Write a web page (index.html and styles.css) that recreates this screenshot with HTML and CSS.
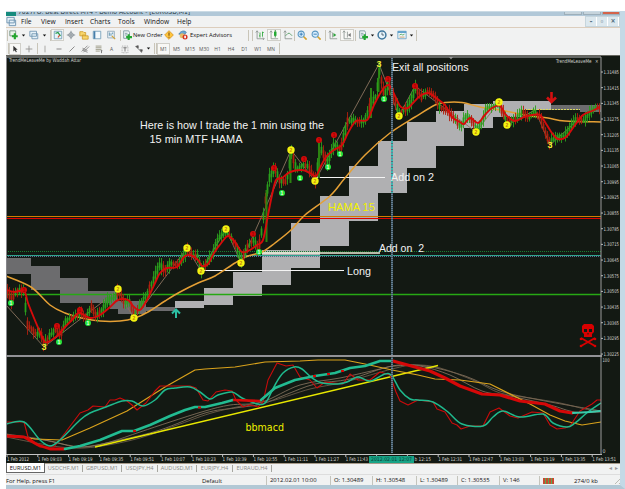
FILE: index.html
```html
<!DOCTYPE html>
<html lang="en">
<head>
<meta charset="utf-8">
<title>Demo Account - [EURUSD,M1]</title>
<link rel="stylesheet" href="styles.css">
</head>
<body>
<svg class="defs" width="0" height="0">
  <symbol id="plus" viewBox="0 0 12 12"><path d="M1 1h7v6H1z" fill="#eaf4ea" stroke="#6b8a78"/><path d="M7 4v7M3.500 7.500h7" stroke="#23a52d" stroke-width="2.600"/></symbol>
  <symbol id="pages" viewBox="0 0 12 12"><path d="M1 1.500h8v6H1zM3.500 4.500h7v6h-7z" fill="#e6f1f8" stroke="#6c93b0"/></symbol>
  <symbol id="market" viewBox="0 0 12 12"><path d="M1.500 1.500h9v9h-9z" fill="#e4f3fa" stroke="#6d9bb5"/><path d="M3 4l3-1 3 4" stroke="#279b49" fill="none" stroke-width="1.500"/><path d="M6 9l2-3" stroke="#d54a2d" stroke-width="1.500"/></symbol>
  <symbol id="cross" viewBox="0 0 12 12"><path d="M6 1v10M1 6h10" stroke="#77828a"/><circle cx="6" cy="6" r="2.700" fill="none" stroke="#77828a"/></symbol>
  <symbol id="folders" viewBox="0 0 12 12"><path d="M1 2h4l1 1h2v4H1zM4 6h3l1 1h3v4H4z" fill="#f8d66c" stroke="#cf9d31"/></symbol>
  <symbol id="terminal" viewBox="0 0 12 12"><path d="M1.500 1.500h9v9h-9z" fill="#f4f9fc" stroke="#6f9cb8"/><path d="M3 1.500v9" stroke="#477eaa" stroke-width="2"/></symbol>
  <symbol id="tester" viewBox="0 0 12 12"><path d="M2 1.500h8v8H2z" fill="#e8eff6" stroke="#8ba5b5"/><path d="M4 3v4M6 4v3M8 3v2" stroke="#4f8aa6"/><path d="M7 7l4 4" stroke="#d0a438" stroke-width="1.500"/></symbol>
  <symbol id="order" viewBox="0 0 12 12"><path d="M2 1h6l1 2v7H2z" fill="#eef3f5" stroke="#77949a"/><path d="M3.500 4h3M3.500 6h3" stroke="#7a96a0"/><path d="M8 5v7M5 8.500h7" stroke="#22a632" stroke-width="2.500"/></symbol>
  <symbol id="diamond" viewBox="0 0 12 12"><path d="M6 .8L11.200 6 6 11.200.8 6z" fill="#ffc63c" stroke="#d89422"/><path d="M6 3v4M6 8v1.300" stroke="#805715" stroke-width="1.400"/></symbol>
  <symbol id="expert" viewBox="0 0 12 12"><path d="M1 5C3 1 8 0 10 3L8 5z" fill="#6ba8d2" stroke="#4b7fa8"/><circle cx="5" cy="7" r="3" fill="#e9b965"/><circle cx="8.500" cy="8.500" r="3" fill="#d33322"/><path d="M7.500 7h2v3h-2z" fill="#fff"/></symbol>
  <symbol id="bars" viewBox="0 0 12 12"><path d="M2.500 1v9.500H11M1 3l1.500-2L4 3M9.500 9l1.500 1.500L9.500 12" fill="none" stroke="#8a948f"/><path d="M6 3v6M9 2v6M5 7h1M9 3h1.500" stroke="#26a534"/></symbol>
  <symbol id="candle" viewBox="0 0 12 12"><path d="M2.500 1v9.500H11M1 3l1.500-2L4 3" fill="none" stroke="#8a948f"/><path d="M7.500 0v9" stroke="#187c24"/><path d="M6 2h3v5H6z" fill="#24aa35"/></symbol>
  <symbol id="line" viewBox="0 0 12 12"><path d="M2.500 1v9.500H11M1 3l1.500-2L4 3" fill="none" stroke="#8a948f"/><path d="M3 7l3-3 2 0 3 3" fill="none" stroke="#4c985b"/></symbol>
  <symbol id="zin" viewBox="0 0 12 12"><path d="M7.500 7.500l4 4" stroke="#d6a32f" stroke-width="2"/><circle cx="5" cy="5" r="3.700" fill="#d8efff" stroke="#5896c0" stroke-width="1.300"/><path d="M3 5h4M5 3v4" stroke="#276eaa"/></symbol>
  <symbol id="zout" viewBox="0 0 12 12"><path d="M7.500 7.500l4 4" stroke="#d6a32f" stroke-width="2"/><circle cx="5" cy="5" r="3.700" fill="#d8efff" stroke="#5896c0" stroke-width="1.300"/><path d="M3 5h4" stroke="#276eaa"/></symbol>
  <symbol id="scroll" viewBox="0 0 12 12"><path d="M2.500 1v9.500H11M1 3l1.500-2L4 3M5.500 3v6" fill="none" stroke="#8a948f"/><path d="M6.500 3.500L10 6 6.500 8.500z" fill="#2ca13b"/></symbol>
  <symbol id="shift" viewBox="0 0 12 12"><path d="M2.500 1v9.500H11M1 3l1.500-2L4 3M6.500 2v7" fill="none" stroke="#8a948f"/><path d="M10.500 3.500L7 6l3.500 2.500z" fill="#777"/></symbol>
  <symbol id="clock" viewBox="0 0 12 12"><circle cx="6" cy="6" r="4.700" fill="#e8f5fb" stroke="#40779d" stroke-width="1.800"/><path d="M6 3v3h2.500" stroke="#456" fill="none"/></symbol>
  <symbol id="template" viewBox="0 0 12 12"><path d="M1 1.500h10v9H1z" fill="#eef6fb" stroke="#69a0c3"/><path d="M1 2.500h10" stroke="#559bc9" stroke-width="2"/><path d="M3 6l2-1 2 1 2-1" stroke="#4ba558" fill="none"/><path d="M3 8.500h6" stroke="#c99358"/></symbol>
  <symbol id="cursor" viewBox="0 0 12 12"><path d="M4 2v7l1.800-1.500L7 10l1.200-.5L7 7h2.200z" fill="#333"/></symbol>
  <symbol id="thin" viewBox="0 0 12 12"><path d="M6 2v8M2 6h8" stroke="#8c8c89"/></symbol>
  <symbol id="vert" viewBox="0 0 12 12"><path d="M6 2v8" stroke="#9b9b98"/></symbol>
  <symbol id="hori" viewBox="0 0 12 12"><path d="M3 6h6" stroke="#777"/></symbol>
  <symbol id="slant" viewBox="0 0 12 12"><path d="M3 9l6-6" stroke="#777"/></symbol>
  <symbol id="channel" viewBox="0 0 12 12"><path d="M2 9l7-7M4 10l7-7M3 5l6 3M3 7l6 3" stroke="#777" stroke-width=".9"/></symbol>
  <symbol id="fibo" viewBox="0 0 12 12"><path d="M2 2.500h7M2 4.500h7M2 6.500h7M2 8.500h5" stroke="#93927c"/><path d="M9 8v3M8 8h2" stroke="#666"/></symbol>
  <symbol id="label" viewBox="0 0 12 12"><path d="M2.500 2.500h7v8h-7z" fill="none" stroke="#999" stroke-dasharray="1"/><path d="M4 4.500h4M6 4.500V9" stroke="#666"/></symbol>
  <symbol id="arrows" viewBox="0 0 12 12"><path d="M2 3l3-1 0 3zM7 7l3 0-1 3z" fill="#555" stroke="#555"/><path d="M4 5l5 4" stroke="#777"/></symbol>
  <symbol id="drop" viewBox="0 0 5 5"><path d="M.8 1.500h3.400L2.500 3.500z" fill="#111"/></symbol>
</svg>
<main class="window">
  <header class="title"><i class="appicon"></i><span class="caption">7027FO: Best Direct MT4 - Demo Account - [EURUSD,M1]</span><span class="winbuttons"><b></b><b></b><b class="close"></b></span></header>
  <nav class="menu">
    <svg class="menuicon" viewBox="0 0 12 12"><use href="#pages"/></svg>
    <span>File</span><span>View</span><span>Insert</span><span>Charts</span><span>Tools</span><span>Window</span><span>Help</span>
    <div class="mdi"><b>-</b><b>▫</b><b>×</b></div>
  </nav>
  <section class="bar main-bar" id="mainbar"></section>
  <section class="bar draw-bar" id="drawbar"></section>
  <svg class="chart" id="chart" viewBox="6 55 614 408" width="614" height="408"></svg>
  <div class="tabs"><span class="on">EURUSD,M1</span><span>USDCHF,M1</span><span>GBPUSD,M1</span><span>USDJPY,H4</span><span>AUDUSD,M1</span><span>EURJPY,H4</span><span>EURAUD,H4</span><em>◂&nbsp;&nbsp;▸</em></div>
  <footer class="status">
    <span>For Help, press F1</span><span>Default</span><span class="cell">2012.02.01 10:00</span><span class="cell">O: 1.30489</span><span class="cell">H: 1.30548</span><span class="cell">L: 1.30489</span><span class="cell">C: 1.30535</span><span class="cell">V: 146</span><span class="cell"><i class="signal"></i></span><span class="traffic">274/0 kb</span><i class="resize"></i>
  </footer>
</main>
<script src="chart.js"></script>
</body>
</html>
```
FILE: styles.css
```css
* { box-sizing: border-box; }
body { margin: 0; background: #fff; font-family: "Open Sans", "Noto Sans", sans-serif; overflow: hidden; }
.defs { display: block; position: absolute; }
.window { width: 619px; height: 478px; margin: 11px 0 0 6px; background: #f1f2f2; border-right: 5px solid #c4d9e6; border-bottom: 4px solid #b2c8d5; }
.title { height: 5px; background: #b1c8d8; display: flex; overflow: hidden; border-top: 1px solid #cbdbe5; }
.appicon { width: 10px; height: 4px; background: #168b7e; }
.caption { font: 6.700px/8px "DejaVu Sans Condensed", "DejaVu Sans", sans-serif; margin: -4px 0 0 2px; color: #2c3b45; width: 190px; white-space: nowrap; }
.winbuttons { margin-left: auto; display: flex; gap: 1px; }
.winbuttons b { width: 18px; height: 3px; background: #c6d4dc; border: 1px solid #9dafba; border-top: 0; }
.winbuttons .close { background: #d4634a; }
.menu { height: 12px; display: flex; align-items: center; font-size: 6.700px; line-height: 12px; color: #111; border-bottom: 1px solid #dccdbc; }
.menuicon { width: 11px; height: 11px; margin-right: 4px; }
.menu span { width: 24px; white-space: nowrap; }
.menu span:nth-of-type(1) { width: 20px; }
.menu span:nth-of-type(3) { width: 25px; }
.menu span:nth-of-type(4) { width: 28px; }
.menu span:nth-of-type(5) { width: 26px; }
.menu span:nth-of-type(6) { width: 33px; }
.mdi { margin-left: auto; display: flex; background: #dce8ee; border: 1px solid #c6d5dc; height: 11px; }
.mdi b { width: 11px; text-align: center; line-height: 8px; font-size: 8px; color: #597383; border-right: 1px solid #fff; }
.bar { display: grid; align-items: center; justify-content: start; font-size: 5.800px; line-height: 10px; white-space: nowrap; color: #111; }
.main-bar { height: 14px; grid-template-columns: 2px 12px 7px 14px 6px 4px 13px 13px 13px 14px 14px 3px 12px 29px 14px 14px 46px 13px 4px 14px 14px 13px 1px 14px 14px 3px 14px 14px 2px 14px 5px 14px 5px 15px 5px 3px; }
.draw-bar { height: 13px; grid-template-columns: 3px 12px 15px 2px 14px 13px 13px 14px 13px 13px 14px 13px 6px 4px 2px 13px 13px 14px 14px 13px 14px 13px 14px 12px 3px; color: #555; font-size: 4.900px; }
.bar svg { display: block; width: 10px; height: 10px; justify-self: center; }
.bar svg.tiny { width: 5px; height: 5px; }
.bar .sep { height: 11px; border-right: 1px solid #c9c5b8; }
.bar .press { border: 1px solid #d0cfc9; background: #f8f8f6; height: 12px; display: grid; place-items: center; }
.bar .txt { text-align: center; }
.bar .txt.wide { text-align: left; }
.chart { display: block; font-family: "DejaVu Sans Condensed", "DejaVu Sans", sans-serif; background: #131913; }
.note { font-family: "Liberation Sans", Arial, sans-serif; font-size: 10.700px; fill: #f2f2f2; }
.yellow { fill: #f0f000; }
.axis { font-size: 5.200px; fill: #d4d4d0; }
.dot { font: bold 5px "Liberation Sans", sans-serif; text-anchor: middle; }
.three { font: bold 9px "Liberation Sans", sans-serif; text-anchor: middle; fill: #eded36; }
.tabs { height: 11px; display: flex; font-size: 5.600px; line-height: 9px; color: #8b8b88; border-top: 1px solid #a99c8b; }
.tabs span { width: 39px; text-align: center; border-right: 1px solid #a7a7a0; height: 7px; margin-top: 1px; line-height: 7px; }
.tabs span:nth-child(2) { width: 38px; }
.tabs span:nth-child(4) { width: 36px; }
.tabs span:nth-child(6) { width: 36px; }
.tabs .on { height: 10px; margin-top: -1px; line-height: 10px; color: #111; background: #fff; border: 1px solid #666; border-top: 0; width: 39px; }
.tabs em { margin-left: auto; margin-right: 2px; color: #999; font-style: normal; font-size: 6px; }
.status { height: 12px; display: grid; grid-template-columns: 196px 64px 64px 42px 44px 41px 42px 40px 30px 44px 1fr; align-items: center; font-size: 5.900px; line-height: 10px; border-top: 1px solid #ddd; color: #111; white-space: nowrap; }
.status .cell { border-left: 1px solid #c4c4bc; padding-left: 3px; height: 9px; line-height: 9px; }
.status .traffic { padding-left: 5px; }
.signal { display: block; width: 11px; height: 6px; margin-top: 2px; background: repeating-linear-gradient(90deg, #c84b32 0 2px, #5aa850 2px 3px); }
.resize { justify-self: end; width: 7px; height: 7px; background: repeating-linear-gradient(135deg, #bcbcb4 0 1px, #f1f2f2 1px 3px); clip-path: polygon(100% 0, 100% 100%, 0 100%); }
```
FILE: chart.js
```js
// Toolbars
const icon = n => `<svg viewBox="0 0 12 12"><use href="#${n}"/></svg>`;
const drop = '<svg class="tiny" viewBox="0 0 5 5"><use href="#drop"/></svg>';
const sep = '<i class="sep"></i>';
const press = s => `<div class="press">${s}</div>`;
const word = (s, c = '') => `<span class="txt ${c}">${s}</span>`;
document.getElementById('mainbar').innerHTML = [
  sep, icon('plus'), drop, icon('pages'), drop, sep, press(icon('market')), icon('cross'), icon('folders'), icon('terminal'), icon('tester'), sep,
  icon('order'), word('New Order', 'wide'), icon('diamond'), icon('expert'), word('Expert Advisors', 'wide'), sep, sep,
  icon('bars'), press(icon('candle')), icon('line'), sep, icon('zin'), icon('zout'), sep, icon('scroll'), press(icon('shift')), sep,
  icon('order'), drop, icon('clock'), drop, icon('template'), drop, sep].join('');
document.getElementById('drawbar').innerHTML = [
  sep, press(icon('cursor')), icon('thin'), sep, icon('vert'), icon('hori'), icon('slant'), icon('channel'), icon('fibo'), word('A'), icon('label'), icon('arrows'), drop, sep, sep,
  press('M1'), word('M5'), word('M15'), word('M30'), word('H1'), word('H4'), word('D1'), word('W1'), word('MN'), sep].join('');

// Chart
let out = '';
const rect = (x, y, x2, y2, f) => { out += `<rect x="${x}" y="${y}" width="${x2 - x}" height="${y2 - y}" fill="${f}"/>`; };
const line = (pts, c, w = 1, extra = '') => { out += `<polyline points="${pts}" fill="none" stroke="${c}" stroke-width="${w}" stroke-linejoin="round" ${extra}/>`; };
const text = (x, y, s, cls, len, extra = '') => { out += `<text x="${x}" y="${y}" class="${cls}" xml:space="preserve" ${len ? `textLength="${len}" lengthAdjust="spacingAndGlyphs"` : ''} ${extra}>${s}</text>`; };
const smooth = (s, c, w) => {
  const p = s.split(' ').map(v => v.split(',').map(Number));
  let d = `M${p[0]}`;
  for (let i = 0; i < p.length - 1; i++) {
    const a = p[i - 1] || p[i], b = p[i], e = p[i + 1], f = p[i + 2] || e;
    d += `C${b[0] + (e[0] - a[0]) / 6},${b[1] + (e[1] - a[1]) / 6} ${e[0] - (f[0] - b[0]) / 6},${e[1] - (f[1] - b[1]) / 6} ${e}`;
  }
  out += `<path d="${d}" fill="none" stroke="${c}" stroke-width="${w}"/>`;
};

[[6, 258, 31, 274], [31, 266, 60, 290], [60, 278, 88, 303], [88, 291, 118, 303], [110, 301, 146, 309], [118, 309, 146, 314], [146, 307, 175, 311], [551, 105, 601, 110], [580, 106, 601, 112]].forEach(r => rect(...r, '#6c6c6e'));
[[175, 301, 204, 308], [204, 288, 233, 305], [233, 272, 262, 296], [262, 250, 291, 285], [291, 223, 320, 268], [320, 196, 349, 246], [349, 166, 378, 221], [378, 141, 407, 193], [407, 122, 436, 168], [436, 111, 464, 146], [464, 104, 493, 128], [493, 101, 522, 117], [522, 101, 551, 110]].forEach(r => rect(...r, '#b0b0b2'));

line('6,216.5 601,216.5', '#d47c00');
line('6,218.5 601,218.5', '#e00000');
line('6,251.5 601,251.5', '#168030', 1, 'stroke-dasharray="1 1"');
line('6,255.5 601,255.5', '#2fa48e');
line('6,256.5 601,256.5', '#5a6d90', 1, 'stroke-dasharray="1 1"');
line('6,294.5 601,294.5', '#27a814', 1.4);
line('262,253 380,253', '#f0f0dc', 1.4);
line('202,270.5 344,270.5', '#f4f4f4', 1.2);
line('315,177.5 385,177.5', '#f4f4f4', 1.2);
line('522,109.5 580,109.5', '#d8d860', 1, 'stroke-dasharray="2 1"');
line('6,305 44,347 118,290 134,319 187,248 201,271 226,229 241,263 291,150 315,181 379,64 399,116 415,86 476,132 499,102 507,125 535,110 550,145 580,118', '#8b7460', 0.9);

smooth('6,276 31,287 50,305 65,313 82,318 100,321 120,321 135,318 148,312 165,301 180,292 198,283 215,276 235,263 248,256 262,252 275,243 291,230 305,215 330,196 345,178 365,155 390,133 415,117 435,105 445,102.500 462,102.500 480,107 500,110 515,113 530,116 548,118 565,121 601,122', '#e5a035', 1.5);

// Price candles; deterministic jitter around the closing path
const price = '6,289 11,300 16,291 23,290 27,325 32,330 36,335 40,332 44,345 49,336 55,330 60,335 65,322 70,318 76,316 80,312 85,318 91,307 96,316 102,310 108,299 114,298 118,291 124,303 129,301 134,316 140,305 147,293 152,282 159,265 165,270 170,263 177,265 182,259 187,249 192,255 197,256 201,270 207,262 212,254 218,238 226,231 232,240 236,246 241,261 247,247 253,240 258,250 261,232 265,200 269,178 274,168 279,180 286,182 291,152 296,170 302,165 307,166 315,179 320,148 327,162 334,144 340,150 347,122 353,120 358,122 364,121 370,105 376,95 379,70 384,96 388,82 394,100 399,113 406,109 410,102 415,88 421,97 428,91 434,96 440,108 446,110 454,118 460,127 466,115 472,121 476,130 482,122 486,108 492,107 498,103 504,116 508,122 516,118 522,111 528,118 534,111 540,118 545,133 549,142 556,137 564,136 570,127 576,118 583,121 590,112 596,107 601,108'.split(' ').map(v => v.split(',').map(Number));
let seed = 17;
const rnd = () => (seed = (seed * 16807) % 2147483647) / 2147483647;
let seg = 0;
for (let x = 7; x < 600; x += 2) {
  while (price[seg + 1][0] < x) seg++;
  const a = price[seg], b = price[seg + 1], slope = (b[1] - a[1]) / (b[0] - a[0]);
  const y = a[1] + slope * (x - a[0]);
  const up = slope < 0 ? rnd() > 0.15 : rnd() > 0.75;
  const h = 2 + rnd() * 6 + Math.min(Math.abs(slope) * 2, 7);
  const c = up ? '#2aa01c' : '#b0200e';
  rect(x, y - h / 2 - rnd() * 4, x + 0.9, y + h / 2 + rnd() * 4, c);
  rect(x - 0.4, y - h / 3, x + 1.400, y + h / 3, c);
}
rect(265.500, 190, 267.500, 242, '#2c8311');
rect(289.500, 153, 291.500, 183, '#2c8311');
rect(318, 143, 320, 178, '#2c8311');
rect(370, 88, 372, 118, '#2c8311');
rect(378, 68, 379.500, 92, '#2c8311');

smooth('6,290 14,292 24,291 28,303 34,318 40,332 45,342 50,341 58,335 66,326 72,320 79,313 90,318 100,315 110,307 118,300 128,300 133,306 140,310 148,298 155,283 160,273 167,268 177,267 184,257 190,255 198,260 202,266 208,264 214,253 222,242 228,236 235,242 242,252 250,250 257,245 263,240 268,215 272,195 276,180 282,178 290,172 302,170 310,173 316,176 320,168 326,157 334,150 342,145 348,133 356,121 367,120 374,105 381,92 386,86 390,86 396,98 401,107 408,108 413,103 420,96 428,93 436,98 445,105 452,117 460,122 464,124 470,118 478,123 484,116 492,108 500,106 506,115 515,121 524,117 532,115 540,115 545,122 552,133 558,139 566,137 575,125 583,115 592,111 600,107', '#d60b0b', 1.9);

const dots = (list, r, fill, mark, ink) => list.forEach(([x, y]) => {
  out += `<circle cx="${x}" cy="${y}" r="${r}" fill="${fill}"/>`;
  text(x, y + 2, mark, 'dot', 0, `fill="${ink}"`);
});
dots([[24, 290], [80, 310], [57, 326], [253, 234], [274, 168], [304, 159], [319, 140], [334, 135], [388, 79], [415, 86]], 3, '#d30a0a', '1', '#a00000');
dots([[11, 303], [88, 323], [59, 342], [259, 252], [282, 193], [300, 178], [328, 167], [340, 154], [384, 99]], 3, '#24e43a', '1', '#eaffea');
dots([[118, 289], [134, 318], [187, 248], [201, 271], [226, 229], [241, 263], [291, 150], [315, 181], [399, 116], [476, 132], [499, 102], [507, 125]], 3.7, '#f4f410', '2', '#c08010');
text(44, 350, '3', 'three'); text(379, 67, '3', 'three'); text(550, 148, '3', 'three');

out += '<path d="M176 318v-9M172 313.500l4-4 4 4" fill="none" stroke="#2cc0a4" stroke-width="2"/>';
out += '<path d="M551.500 92v9M547 97.500l4.500 4.500 4.500-4.500" fill="none" stroke="#d41010" stroke-width="2.600"/>';
out += '<g fill="#d80000"><path d="M584 324h8l2 2v6l-2 2v3h-8v-3l-2-2v-6z"/><path d="M581 338l14 8M595 338l-14 8" stroke="#d80000" stroke-width="1.800"/><circle cx="581" cy="339" r="1.300"/><circle cx="595" cy="339" r="1.300"/><circle cx="581" cy="346" r="1.300"/><circle cx="595" cy="346" r="1.300"/></g><path d="M584 329h3v3h-3zM589 329h3v3h-3zM587.500 333h1v1.500h-1z" fill="#131913"/>';

// Indicator pane
smooth('6,434 40,439 62,444 85,447 110,442 140,432 170,422 205,411 230,405 262,402 300,385 340,378 380,369 395,366 420,366 450,375 482,391 510,396 550,405 575,412 601,412', '#8d7963', 0.8);
smooth('6,435 50,441 80,447 120,440 160,430 205,413 235,408 262,404 285,395 315,384 350,379 392,366 425,366 465,376 500,391 540,400 601,411', '#8d7963', 0.8);
smooth('6,437 60,447 95,447 140,438 180,424 215,412 262,402 275,400 310,389 345,382 392,369 415,365 440,368 475,381 500,393 530,398 560,403 585,409 601,411', '#75634f', 0.8);
line('95,447 438,365.500', '#e8e800', 1.4);
line('6,435 35,439 62,440 90,428 127,411 165,387 195,370 205,369 235,367 265,362 300,361 318,360 345,360 365,364 392,370 418,375 435,379 460,380 490,384 530,404 550,415 565,421 582,425 601,422', '#daa31c', 1.2);
line('6,422 24,422 28,437 40,447 54,447 65,433 80,413 88,410 93,406 105,407 110,400 115,400 120,398 127,401 132,405 137,410 146,403 155,391 160,386 190,386 196,388 203,400 208,401 216,392 225,390 232,391 236,400 243,407 250,405 258,407 263,402 268,380 277,363 286,366 293,365 300,377 310,380 317,388 325,382 343,384 350,374 358,380 370,380 380,372 390,375 396,392 400,401 408,405 418,400 433,402 437,409 445,412 452,423 457,425 461,429 470,426 483,426 490,412 499,408 510,416 518,418 532,412 543,413 550,425 557,429 565,428 570,426 580,411 592,404 597,400 601,400', '#cb0b0b', 1.1);
smooth('6,424 24,422 40,440 50,446 60,440 80,420 90,413 106,407 122,401 132,401 143,406 155,400 165,390 175,388 190,387 200,392 210,399 218,395 232,392 242,398 258,404 266,402 275,385 283,373 294,367 302,369 312,378 322,383 338,384 347,382 358,377 370,381 385,374 392,376 400,390 410,399 418,400 433,402 448,412 462,424 483,426 493,417 503,411 520,417 543,414 553,423 567,427 575,423 588,412 601,403', '#1fb98d', 1.5);
const thick = (s, c, w = 2.6) => line(s, c, w, 'stroke-linecap="round"');
thick('6,436 24,437 38,445 50,449 64,449', '#d60808', 2.8);
thick('65,449 80,446 100,440 122,431 134,431 150,425 170,416 185,410 195,407 205,407 222,403 233,400', '#22bc92');
thick('234,400 260,401', '#d60808');
thick('261,400 275,388 295,380 315,376 335,373 350,368 365,366 380,361 392,361', '#22bc92');
[[134, 431], [199, 407.500], [314, 376], [328, 374], [342, 371]].forEach(([x, y]) => rect(x - 1, y - 1, x + 2, y + 1, '#d60808'));
thick('393,361 415,367 430,371 445,378 460,386 482,394 500,395 520,401 545,404 560,411 572,413', '#d60808', 3.2);
thick('573,413 590,412 600,411', '#3acbab', 2.2);

// Frame, crosshair, axes
line('392,58 392,453', '#3d5a68', 1.6);
line('392,58 392,453', '#7288a0', 1.6, 'stroke-dasharray="1 1"');
line('392,141 392,193', '#35c9bd', 1.6, 'stroke-dasharray="2 1"');
rect(6, 55, 620, 56, '#66665f');
rect(6, 56.500, 601, 57.500, '#b5b5b5');
rect(6, 56, 7, 454, '#85858a');
rect(6, 355, 602, 357, '#929296');
rect(6, 454, 602, 455, '#c4c4c4');
rect(600.500, 57, 601.500, 455, '#9b9b9b');
out += '<path d="M449 57h4l-2 2.500z" fill="#999"/>';
for (let i = 0; i < 19; i++) {
  const y = 72 + i * 15.67;
  rect(601, y - 0.5, 603, y + 0.5, '#bbb');
  text(603.500, y + 2, (1.31485 - i * 0.0007).toFixed(5), 'axis', 15.5);
}
text(602.500, 362, '100', 'axis', 7); text(602.500, 453, '0', 'axis', 3);
const times = ['1 Feb 2012', '09:03', '09:19', '09:35', '09:51', '10:07', '10:23', '10:39', '10:55', '11:11', '11:27', '11:43', '', '', '12:31', '12:47', '13:03', '13:19', '13:35', '13:51'];
times.forEach((t, i) => {
  const x = 6.500 + i * 30.8;
  rect(x, 455, x + 1, 457, '#bbb');
  if (t) text(x + 0.500, 461, i ? '1 Feb ' + t : t, 'axis', i ? (i === 11 ? 22 : 24) : 22);
});
rect(369, 456, 414, 463, '#17a386');
text(371, 461, '2012.02.01 12:07', 'axis', 41, 'style="fill:#073f35"');
text(414.500, 461, 'b 12:15', 'axis', 16.500);

// Notes
text(392, 71, 'Exit all positions', 'note', 76.500);
text(140, 129, 'Here is how I trade the 1 min using the', 'note', 184);
text(149.500, 143, '15 min MTF HAMA', 'note', 93);
text(391, 181, 'Add on 2', 'note', 43);
text(328, 211, 'HAMA 15', 'note yellow', 47);
text(379, 252, 'Add on  2', 'note', 45);
text(347, 275, 'Long', 'note', 24);
text(245.500, 431, 'bbmacd', 'note yellow', 38.500, 'style="font-family:\'DejaVu Sans\'"');
text(9, 61.500, 'TrendMeLeaveMe by Waddah Attar', 'axis', 72);
text(556, 63, 'TrendMeLeaveMe', 'axis', 35.5);
text(595, 63, '×', 'axis', 3.5);
document.getElementById('chart').innerHTML = out;
```
